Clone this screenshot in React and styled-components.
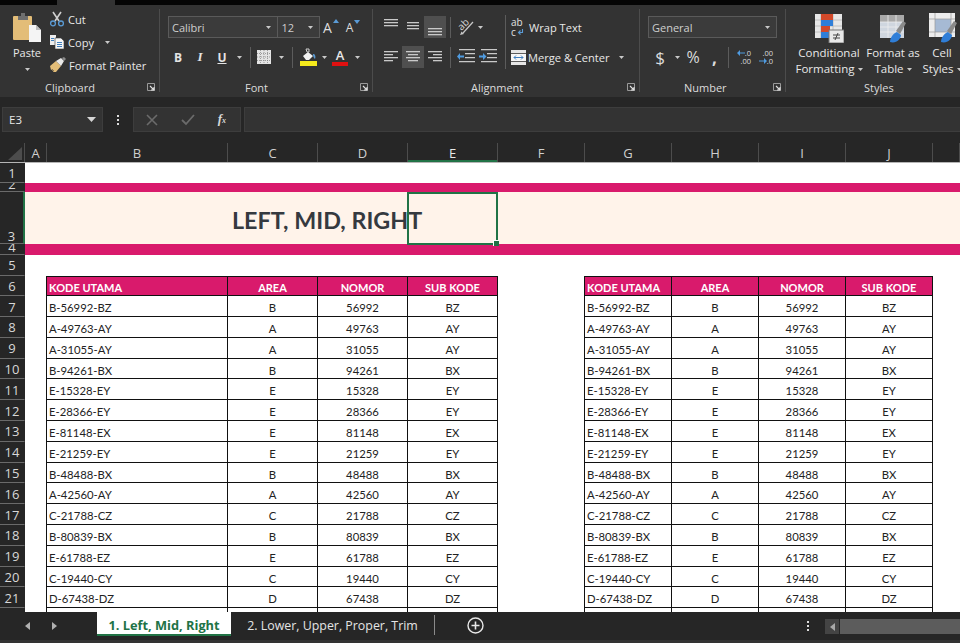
import React from 'react'
import styled, { createGlobalStyle } from 'styled-components'

const GRID = '25px 22px 181px 90px 90px 90px 87px 87px 87px 87px 87px 27px'
const UI_FONT = '"Open Sans", "Noto Sans", sans-serif'
const CELL_FONT = 'Lato, "Noto Sans", sans-serif'
const PINK = '#d91a6c'
const GREEN = '#217346'

const CODES = [
    'B-56992-BZ', 'A-49763-AY', 'A-31055-AY', 'B-94261-BX', 'E-15328-EY',
    'E-28366-EY', 'E-81148-EX', 'E-21259-EY', 'B-48488-BX', 'A-42560-AY',
    'C-21788-CZ', 'B-80839-BX', 'E-61788-EZ', 'C-19440-CY', 'D-67438-DZ',
]
const COLUMNS = ['A', 'B', 'C', 'D', 'E', 'F', 'G', 'H', 'I', 'J', '']

const Global = createGlobalStyle`
    html, body { margin: 0; padding: 0; height: 643px; overflow: hidden; background: #262626; }
    * { box-sizing: border-box; }
`

const Lines = ({ rows, color = '#c9c9c9' }) => (
    <svg width="18" height="18" viewBox="0 0 18 18">
        {rows.map(([x, y, w], i) => <rect key={i} x={x} y={y} width={w} height="1.3" fill={color} />)}
    </svg>
)

const PasteIcon = () => (
    <svg width="30" height="30" viewBox="0 0 30 30">
        <rect x="1" y="3" width="19" height="24" rx="1" fill="#e3bd78" />
        <path d="M6 7V3h3V0h4v3h3v4z" fill="#6f6f6f" />
        <path d="M17 12h7l5 5v12H17z" fill="#f4f4f4" />
        <path d="M24 12v5h5z" fill="#bdbdbd" />
    </svg>
)
const CutIcon = () => (
    <svg width="16" height="16" viewBox="0 0 16 16">
        <path d="M4 1l6 9M12 1l-6 9" stroke="#cfcfcf" strokeWidth="1.6" fill="none" />
        <circle cx="4" cy="12.4" r="2.4" stroke="#5b9bd5" strokeWidth="1.3" fill="none" />
        <circle cx="12" cy="12.4" r="2.4" stroke="#5b9bd5" strokeWidth="1.3" fill="none" />
    </svg>
)
const CopyIcon = () => (
    <svg width="16" height="16" viewBox="0 0 16 16">
        <path d="M1 1h6v10H1z" fill="#ededed" />
        <path d="M6 4h6l3 3v8H6z" fill="#f6f6f6" stroke="#3a3a3a" strokeWidth=".6" />
        <path d="M2 4h3v1H2zM2 6h3v1H2zM8 8h5v1H8zM8 10h5v1H8zM8 12h5v1H8z" fill="#3f7fbf" />
    </svg>
)
const PainterIcon = () => (
    <svg width="17" height="16" viewBox="0 0 17 16">
        <path d="M1 9l6-5 5 5-5 6H4l1-2-2 1 1-2-2 1z" fill="#e3bd78" />
        <path d="M7 4l5-3 3 3-3 5z" fill="#e9e9e9" />
        <path d="M13 1l2-1 2 2-2 2z" fill="#8c8c8c" />
    </svg>
)
const Launcher = () => (
    <svg width="8" height="8" viewBox="0 0 8 8">
        <path d="M.5.5h7v7h-7z" fill="none" stroke="#9a9a9a" />
        <path d="M3 3l4 4M4 7h3V4" fill="none" stroke="#e0e0e0" strokeWidth="1.1" />
    </svg>
)
const GrowIcon = ({ small, up }) => (
    <Grow $small={small}>
        A
        <svg width="6" height="4" viewBox="0 0 6 4"><path d={up ? 'M3 0l3 4H0z' : 'M0 0h6L3 4z'} fill="#5b9bd5" /></svg>
    </Grow>
)
const BorderIcon = () => (
    <svg width="14" height="14" viewBox="0 0 14 14">
        <rect width="14" height="14" fill="#e4e4e4" />
        <path d="M7 0v14M0 7h14M3.5 0v14M10.5 0v14M0 3.5h14M0 10.5h14" stroke="#7c7c7c" strokeWidth=".7" strokeDasharray="1 1" />
    </svg>
)
const FillIcon = () => (
    <svg width="17" height="18" viewBox="0 0 17 18">
        <path d="M3 8l5-4 5 4-4 4H6z" fill="#f2f2f2" />
        <path d="M6 1h3v3H7z" fill="none" stroke="#d0d0d0" />
        <path d="M13 6c2 0 3 2 2 5-1-1-2-2-2-5z" fill="#5b9bd5" />
        <rect y="13" width="17" height="5" fill="#f5ea1c" />
    </svg>
)
const OrientIcon = () => (
    <OrientGlyph>
        <span>ab</span>
        <svg width="18" height="18" viewBox="0 0 18 18">
            <path d="M16 4L6 15" fill="none" stroke="#c9c9c9" strokeWidth="1.2" />
            <path d="M3 17l4-1-2.500-2.500z" fill="#c9c9c9" />
        </svg>
    </OrientGlyph>
)
const WrapIcon = () => (
    <WrapGlyph>
        <span>ab</span>
        <span>c<svg width="7" height="7" viewBox="0 0 7 7"><path d="M5.500 0v3.500H2M3.500 1.500L1.500 3.500l2 2" fill="none" stroke="#5b9bd5" strokeWidth="1.1" /></svg></span>
    </WrapGlyph>
)
const MergeIcon = () => (
    <svg width="15" height="15" viewBox="0 0 15 15">
        <rect width="15" height="15" fill="#e6e6e6" />
        <path d="M0 3.500h15M0 11.500h15" stroke="#5c5c5c" />
        <rect x="0" y="4" width="15" height="7" fill="#f7f7f7" />
        <path d="M3 7.500h9M5 5.500l-2 2 2 2M10 5.500l2 2-2 2" fill="none" stroke="#3f7fbf" />
    </svg>
)
const IndentIcon = ({ flip }) => (
    <svg width="18" height="16" viewBox="0 0 18 16">
        <path d="M2 0h16v1.300H2zM8 4h10v1.300H8zM8 8h10v1.300H8zM2 12h16v1.300H2z" fill="#c9c9c9" />
        <path d={flip ? 'M0 6.500h4V4l3.500 3.500L4 11V8.500H0z' : 'M7 6.500H3V4L0 7.500 3 11V8.500h4z'} fill="#4f9be0" />
    </svg>
)
const DecimalArrow = ({ left }) => (
    <svg width="8" height="6" viewBox="0 0 8 6"><path d={left ? 'M8 2.500H3V0L0 3l3 3V3.500h5z' : 'M0 2.500h5V0l3 3-3 3V3.500H0z'} fill="#4f9be0" /></svg>
)
const DecimalIcon = ({ left }) => (
    <DecimalGlyph>
        {left
            ? <><span><DecimalArrow left />.0</span><span>.00</span></>
            : <><span>.00</span><span><DecimalArrow />.0</span></>}
    </DecimalGlyph>
)
const Brush = ({ x }) => (
    <g transform={`translate(${x} 0)`}>
        <path d="M0 29c0-5 4-9 7-10l4 3c0 4-5 9-11 7z" fill="#2f7ed8" />
        <path d="M6 18l7-10 3 2-6 11z" fill="#8a8a8a" />
    </g>
)
const ConditionalIcon = () => (
    <svg width="30" height="30" viewBox="0 0 30 30">
        <rect x="1" y="1" width="27" height="24" fill="#e7e7e7" />
        <path d="M7 1v24M19 1v24M1 7h27M1 13h27M1 19h27" stroke="#b5b5b5" strokeWidth=".8" />
        <rect x="7" y="1" width="12" height="6" fill="#d2492a" />
        <rect x="7" y="7" width="12" height="6" fill="#2f7ed8" />
        <rect x="7" y="13" width="9" height="6" fill="#d2492a" />
        <rect x="7" y="19" width="9" height="6" fill="#2f7ed8" />
        <rect x="15" y="17" width="15" height="13" fill="#e8e8e8" stroke="#777" />
        <path d="M19 22h7M19 25h7M24 20l-3 7" stroke="#444" strokeWidth="1" />
    </svg>
)
const TableIcon = () => (
    <svg width="34" height="30" viewBox="0 0 34 30">
        <rect x="4" y="2" width="24" height="23" fill="#cfd6df" />
        <rect x="4" y="2" width="24" height="7" fill="#a9a9a9" />
        <path d="M12 2v23M20 2v23M4 9h24M4 14h24M4 19h24" stroke="#eeeeee" strokeWidth=".8" />
        <Brush x={14} />
    </svg>
)
const CellIcon = () => (
    <svg width="34" height="30" viewBox="0 0 34 30">
        <rect x="4" y="0" width="26" height="24" fill="#ececec" />
        <rect x="10" y="6" width="16" height="13" fill="#a6bad4" />
        <path d="M10 0v24M26 0v24M4 6h26M4 19h26" stroke="#9a9a9a" strokeWidth=".7" />
        <Brush x={16} />
    </svg>
)
const Triangle = () => <svg width="5" height="3" viewBox="0 0 5 3"><path d="M0 0h5L2.500 3z" fill="#c9c9c9" /></svg>

const App = () => {
    return (
        <Page>
            <Global />
            <TopStrip><ActiveTabStub /></TopStrip>
            <Ribbon>
                <Group $w={160}>
                    <GroupBody $pl={8}>
                        <PasteButton>
                            <PasteIcon />
                            <span>Paste</span>
                            <Triangle />
                        </PasteButton>
                        <SmallColumn>
                            <SmallAction><CutIcon />Cut</SmallAction>
                            <SmallAction><CopyIcon />Copy<Caret $ml={8}><Triangle /></Caret></SmallAction>
                            <SmallAction><PainterIcon />Format Painter</SmallAction>
                        </SmallColumn>
                    </GroupBody>
                    <GroupLabel $lead={45}><span />Clipboard<Launcher /></GroupLabel>
                </Group>
                <Group $w={213}>
                    <Stack $pl={8} $top>
                        <ToolRow>
                            <Combo $w={152}>
                                <ComboPart $w={110}>Calibri<Triangle /></ComboPart>
                                <ComboPart $w={42}>12<Triangle /></ComboPart>
                            </Combo>
                            <GrowIcon up />
                            <GrowIcon small />
                        </ToolRow>
                        <ToolRow $ml={-1}>
                            <Tool><Bold>B</Bold></Tool>
                            <Tool><Italic>I</Italic></Tool>
                            <Tool><Under>U</Under></Tool>
                            <Caret $w={12}><Triangle /></Caret>
                            <Divider $ml={5} $mr={2} />
                            <Tool><BorderIcon /></Tool>
                            <Caret $w={12}><Triangle /></Caret>
                            <Divider $ml={5} $mr={4} />
                            <Tool><FillIcon /></Tool>
                            <Caret $w={10}><Triangle /></Caret>
                            <Tool><FontColor>A</FontColor></Tool>
                            <Caret $w={12}><Triangle /></Caret>
                        </ToolRow>
                    </Stack>
                    <GroupLabel $lead={85}><span />Font<Launcher /></GroupLabel>
                </Group>
                <Group $w={267}>
                    <GroupBody $pl={7}>
                        <Stack>
                            <ToolRow>
                                <Tool><Lines rows={[[2, 1, 14], [2, 4, 14], [2, 7, 14]]} /></Tool>
                                <Tool><Lines rows={[[3, 4, 12], [3, 7, 12], [3, 10, 12]]} /></Tool>
                                <Tool $active><Lines rows={[[2, 10, 14], [2, 13, 14], [2, 16, 14]]} /></Tool>
                                <Divider $ml={4} $mr={4} />
                                <Tool><OrientIcon /></Tool>
                                <Caret $w={7}><Triangle /></Caret>
                            </ToolRow>
                            <ToolRow>
                                <Tool><Lines rows={[[2, 3, 14], [2, 6, 9], [2, 9, 14], [2, 12, 9]]} /></Tool>
                                <Tool $active><Lines rows={[[2, 3, 14], [4, 6, 10], [2, 9, 14], [4, 12, 10]]} /></Tool>
                                <Tool><Lines rows={[[2, 3, 14], [7, 6, 9], [2, 9, 14], [7, 12, 9]]} /></Tool>
                                <Divider $ml={4} $mr={4} />
                                <Tool><IndentIcon /></Tool>
                                <Tool><IndentIcon flip /></Tool>
                            </ToolRow>
                        </Stack>
                        <TallDivider />
                        <Stack $w={125}>
                            <ToolRow><WrapIcon /><ActionText>Wrap Text</ActionText></ToolRow>
                            <ToolRow><MergeIcon /><ActionText>Merge &amp; Center</ActionText><Caret $ml={9}><Triangle /></Caret></ToolRow>
                        </Stack>
                    </GroupBody>
                    <GroupLabel $lead={98}><span />Alignment<Launcher /></GroupLabel>
                </Group>
                <Group $w={146}>
                    <Stack $pl={8} $top>
                        <ToolRow>
                            <Combo $w={129}><ComboPart $w={129}>General<Triangle /></ComboPart></Combo>
                        </ToolRow>
                        <ToolRow>
                            <Tool $w={24}><Symbol $size={17}>$</Symbol></Tool>
                            <Caret $w={10}><Triangle /></Caret>
                            <Tool><Symbol $size={16}>%</Symbol></Tool>
                            <Tool $w={21}><Symbol $size={17} $heavy>,</Symbol></Tool>
                            <Divider $ml={3} $mr={4} />
                            <Tool><DecimalIcon left /></Tool>
                            <Tool><DecimalIcon /></Tool>
                        </ToolRow>
                    </Stack>
                    <GroupLabel $lead={44}><span />Number<Launcher /></GroupLabel>
                </Group>
                <Group $w={174} $last>
                    <GroupBody $pl={10}>
                        <BigButton $w={66}><ConditionalIcon /><span>Conditional<br />Formatting <Triangle /></span></BigButton>
                        <BigButton $w={56}><TableIcon /><span>Format as<br />Table <Triangle /></span></BigButton>
                        <BigButton $w={36}><CellIcon /><span>Cell<br />Styles <Triangle /></span></BigButton>
                    </GroupBody>
                    <GroupLabel $lead={78}><span />Styles<span /></GroupLabel>
                </Group>
            </Ribbon>
            <FormulaBar>
                <NameBox>E3<svg width="9" height="5" viewBox="0 0 9 5"><path d="M0 0h9L4.500 5z" fill="#d6d6d6" /></svg></NameBox>
                <KebabSlot><Kebab /></KebabSlot>
                <FormulaTools>
                    <svg width="12" height="12" viewBox="0 0 12 12"><path d="M1 1l10 10M11 1L1 11" stroke="#6b6b6b" strokeWidth="1.6" /></svg>
                    <svg width="14" height="12" viewBox="0 0 14 12"><path d="M1 6l4 4 8-9" stroke="#6b6b6b" strokeWidth="1.800" fill="none" /></svg>
                    <Fx>f<sub>x</sub></Fx>
                </FormulaTools>
                <FormulaInput />
            </FormulaBar>
            <ColumnHeaders>
                <Corner><svg width="14" height="13" viewBox="0 0 14 13"><path d="M14 0v13H0z" fill="#4c4c4c" /></svg></Corner>
                {COLUMNS.map((c, i) => <ColumnHead key={i} $active={c === 'E'}>{c}</ColumnHead>)}
            </ColumnHeaders>
            <Sheet>
                <SheetRow $h={20}><RowHead>1</RowHead></SheetRow>
                <SheetRow $h={9} $bg={PINK}><RowHead $bottom>2</RowHead></SheetRow>
                <SheetRow $h={52} $bg="#fff3ea">
                    <RowHead $active $bottom>3</RowHead>
                    <span /><span />
                    <TitleCell>LEFT, MID, RIGHT</TitleCell>
                    <span />
                    <SelectedCell><Handle /></SelectedCell>
                </SheetRow>
                <SheetRow $h={11} $bg={PINK}><RowHead $bottom>4</RowHead></SheetRow>
                <SheetRow $h={20.5}><RowHead>5</RowHead></SheetRow>
                <SheetRow $h={20.8}>
                    <RowHead>6</RowHead>
                    <span />
                    <HeadCell $first $left>KODE UTAMA</HeadCell>
                    <HeadCell>AREA</HeadCell>
                    <HeadCell>NOMOR</HeadCell>
                    <HeadCell>SUB KODE</HeadCell>
                    <span />
                    <HeadCell $first $left>KODE UTAMA</HeadCell>
                    <HeadCell>AREA</HeadCell>
                    <HeadCell>NOMOR</HeadCell>
                    <HeadCell>SUB KODE</HeadCell>
                </SheetRow>
                {CODES.map((code, i) => {
                    const [area, nomor, sub] = code.split('-')
                    return (
                        <SheetRow key={code} $h={20.8}>
                            <RowHead>{i + 7}</RowHead>
                            <span />
                            <DataCell $first $left>{code}</DataCell>
                            <DataCell>{area}</DataCell>
                            <DataCell>{nomor}</DataCell>
                            <DataCell>{sub}</DataCell>
                            <span />
                            <DataCell $first $left>{code}</DataCell>
                            <DataCell>{area}</DataCell>
                            <DataCell>{nomor}</DataCell>
                            <DataCell>{sub}</DataCell>
                        </SheetRow>
                    )
                })}
                <SheetRow $h={20.8}>
                    <RowHead />
                    <span />
                    <DataCell $first /><DataCell /><DataCell /><DataCell />
                    <span />
                    <DataCell $first /><DataCell /><DataCell /><DataCell />
                </SheetRow>
            </Sheet>
            <TabBar>
                <TabArrows>
                    <svg width="5" height="8" viewBox="0 0 5 8"><path d="M5 0v8L0 4z" fill="#b0b0b0" /></svg>
                    <svg width="5" height="8" viewBox="0 0 5 8"><path d="M0 0v8l5-4z" fill="#b0b0b0" /></svg>
                </TabArrows>
                <ActiveSheetTab>1. Left, Mid, Right</ActiveSheetTab>
                <SheetTab>2. Lower, Upper, Proper, Trim</SheetTab>
                <TabDivider />
                <AddSheet>
                    <svg width="17" height="17" viewBox="0 0 17 17">
                        <circle cx="8.500" cy="8.500" r="7.500" fill="none" stroke="#e8e8e8" strokeWidth="1.400" />
                        <path d="M4.500 8.500h8M8.500 4.500v8" stroke="#e8e8e8" strokeWidth="1.600" />
                    </svg>
                </AddSheet>
                <TabKebab><Kebab /></TabKebab>
                <Scrollbar>
                    <ScrollButton><svg width="5" height="8" viewBox="0 0 5 8"><path d="M5 0v8L0 4z" fill="#a8a8a8" /></svg></ScrollButton>
                    <ScrollThumb />
                </Scrollbar>
            </TabBar>
        </Page>
    )
}

const Page = styled.div`
    width: 960px;
    height: 643px;
    display: flex;
    flex-direction: column;
    overflow: hidden;
    background: #262626;
    font-family: ${UI_FONT};
    color: #e8e8e8;
`

const TopStrip = styled.div`
    height: 5px;
    flex: none;
    background: #050505;
    padding-left: 57px;
`

const ActiveTabStub = styled.div`
    width: 58px;
    height: 5px;
    background: #333;
`

const Ribbon = styled.div`
    height: 92px;
    flex: none;
    display: flex;
    background: #333;
    overflow: hidden;
    font-size: 11px;
`

const Group = styled.div`
    width: ${({ $w }) => $w}px;
    flex: none;
    position: relative;
    &::after{
        content: "";
        display: ${({ $last }) => $last ? 'none' : 'block'};
        position: absolute;
        right: 0;
        top: 4px;
        bottom: 5px;
        width: 1px;
        background: #4c4c4c;
    }
`

const GroupBody = styled.div`
    height: 70px;
    display: flex;
    padding-left: ${({ $pl }) => $pl || 0}px;
    padding-top: 4px;
`

const Stack = styled.div`
    flex: none;
    display: flex;
    flex-direction: column;
    gap: 8px;
    height: ${({ $top }) => $top ? '70px' : 'auto'};
    width: ${({ $w }) => $w ? `${$w}px` : 'auto'};
    padding: ${({ $top }) => $top ? 11 : 7}px 0 0 ${({ $pl }) => $pl || 0}px;
`

const GroupLabel = styled.div`
    height: 22px;
    display: grid;
    grid-template-columns: ${({ $lead }) => $lead}px auto 1fr;
    align-items: center;
    padding: 2px 5px 0 0;
    font-size: 11px;
    color: #dcdcdc;
    svg{ justify-self: end; }
`

const PasteButton = styled.div`
    width: 38px;
    display: flex;
    flex-direction: column;
    align-items: center;
    padding-top: 4px;
    font-size: 11px;
    svg{ flex: none; }
    span{ margin-top: 2px; line-height: 16px; }
    > svg:last-child{ margin-top: 7px; }
`

const SmallColumn = styled.div`
    display: flex;
    flex-direction: column;
    gap: 3px;
    padding-left: 3px;
`

const SmallAction = styled.div`
    height: 20px;
    display: flex;
    align-items: center;
    gap: 3px;
    white-space: nowrap;
    font-size: 11.100px;
    svg{ flex: none; }
`

const Caret = styled.span`
    display: inline-flex;
    align-items: center;
    justify-content: center;
    flex: none;
    width: ${({ $w }) => $w ? `${$w}px` : 'auto'};
    margin-left: ${({ $ml }) => $ml || 0}px;
`

const ToolRow = styled.div`
    height: 22px;
    display: flex;
    align-items: center;
    margin-left: ${({ $ml }) => $ml || 0}px;
`

const Combo = styled.div`
    width: ${({ $w }) => $w}px;
    height: 22px;
    flex: none;
    display: flex;
    border: 1px solid #5a5a5a;
    background: #3b3b3b;
`

const ComboPart = styled.div`
    flex: 1 1 ${({ $w }) => $w}px;
    display: flex;
    align-items: center;
    justify-content: space-between;
    padding: 0 6px 0 3px;
    font-size: 11px;
    color: #cfcfcf;
    & + &{ border-left: 1px solid #5a5a5a; }
`

const Grow = styled.span`
    width: 22px;
    display: flex;
    justify-content: center;
    font-size: ${({ $small }) => $small ? 12 : 14}px;
    color: #dedede;
    svg{ margin-top: 1px; margin-left: 1px; }
`

const Tool = styled.div`
    width: ${({ $w }) => $w || 22}px;
    height: 22px;
    flex: none;
    display: flex;
    align-items: center;
    justify-content: center;
    background: ${({ $active }) => $active ? '#4f4f4f' : 'transparent'};
`

const Bold = styled.b`
    font-size: 12px;
    color: #e4e4e4;
`

const Italic = styled.i`
    font-family: "Liberation Serif", serif;
    font-weight: 700;
    font-size: 13px;
    color: #e4e4e4;
`

const Under = styled.span`
    font-size: 12px;
    font-weight: 700;
    text-decoration: underline;
    color: #e4e4e4;
`

const FontColor = styled.span`
    width: 16px;
    font-size: 13px;
    font-weight: 600;
    line-height: 14px;
    text-align: center;
    border-bottom: 4px solid #e01010;
`

const Divider = styled.div`
    width: 1px;
    height: 21px;
    flex: none;
    background: #5c5c5c;
    margin-left: ${({ $ml }) => $ml}px;
    margin-right: ${({ $mr }) => $mr}px;
`

const TallDivider = styled.div`
    width: 1px;
    height: 54px;
    flex: none;
    margin: 6px 5px 0 6px;
    background: #5c5c5c;
`

const ActionText = styled.span`
    margin-left: 2px;
    font-size: 11.100px;
    white-space: nowrap;
`

const OrientGlyph = styled.span`
    position: relative;
    width: 18px;
    height: 18px;
    span{
        position: absolute;
        left: 0;
        top: 1px;
        font-size: 10px;
        line-height: 10px;
        color: #d6d6d6;
        transform: rotate(-45deg);
    }
    svg{ position: absolute; left: 0; top: 0; }
`

const WrapGlyph = styled.span`
    width: 16px;
    display: flex;
    flex-direction: column;
    font-size: 10px;
    line-height: 10px;
    color: #e2e2e2;
    span{ display: flex; align-items: center; gap: 1px; }
`

const Symbol = styled.span`
    font-size: ${({ $size }) => $size}px;
    font-weight: ${({ $heavy }) => $heavy ? 700 : 400};
    color: #dcdcdc;
`

const DecimalGlyph = styled.span`
    display: flex;
    flex-direction: column;
    align-items: flex-end;
    font-size: 7.500px;
    line-height: 8px;
    color: #dcdcdc;
    span{ display: flex; align-items: center; }
`

const BigButton = styled.div`
    width: ${({ $w }) => $w}px;
    flex: none;
    display: flex;
    flex-direction: column;
    align-items: center;
    margin-right: 3px;
    padding-top: 4px;
    > svg{ flex: none; }
    span{
        margin-top: 2px;
        font-size: 11.500px;
        line-height: 16px;
        text-align: center;
        white-space: nowrap;
    }
    span svg{ vertical-align: middle; }
`

const FormulaBar = styled.div`
    height: 46px;
    flex: none;
    display: flex;
    align-items: flex-start;
    padding: 10px 0 0 2px;
    background: #262626;
`

const NameBox = styled.div`
    width: 101px;
    height: 25px;
    flex: none;
    display: flex;
    align-items: center;
    justify-content: space-between;
    padding: 0 6px;
    font-size: 11.500px;
    border: 1px solid #3d3d3d;
    background: #333;
`

const KebabSlot = styled.div`
    width: 30px;
    height: 25px;
    flex: none;
    display: flex;
    align-items: center;
    justify-content: center;
`

const Kebab = styled.span`
    width: 2px;
    height: 10px;
    display: flex;
    flex-direction: column;
    justify-content: space-between;
    background: linear-gradient(#dcdcdc, #dcdcdc) center / 2px 2px no-repeat;
    &::before, &::after{
        content: "";
        width: 2px;
        height: 2px;
        background: #dcdcdc;
    }
`

const FormulaTools = styled.div`
    width: 108px;
    height: 25px;
    flex: none;
    display: flex;
    align-items: center;
    justify-content: space-between;
    padding: 0 14px 0 12px;
    border: 1px solid #3d3d3d;
    background: #333;
`

const Fx = styled.span`
    font-family: "Liberation Serif", serif;
    font-style: italic;
    font-weight: 700;
    font-size: 13px;
    line-height: 14px;
    color: #d8d8d8;
    sub{ font-size: 8px; vertical-align: baseline; }
`

const FormulaInput = styled.div`
    flex: 1;
    height: 25px;
    margin-left: 3px;
    border: 1px solid #3d3d3d;
    border-right: 0;
    background: #333;
`

const ColumnHeaders = styled.div`
    height: 20px;
    flex: none;
    display: grid;
    grid-template-columns: ${GRID};
    background: #262626;
    border-bottom: 1px solid #b5b5b5;
`

const Corner = styled.div`
    display: flex;
    align-items: flex-end;
    justify-content: flex-end;
    padding: 0 2px 2px 0;
    border-right: 1px solid #4c4c4c;
`

const ColumnHead = styled.div`
    display: flex;
    align-items: center;
    justify-content: center;
    font-size: 13px;
    color: #cfcfcf;
    border-right: 1px solid #4c4c4c;
    ${({ $active }) => $active && `box-shadow: inset 0 -2px 0 ${GREEN}; color: #e8e8e8;`}
`

const Sheet = styled.div`
    flex: 1;
    min-height: 0;
    overflow: hidden;
    background: #fff;
`

const SheetRow = styled.div`
    height: ${({ $h }) => $h}px;
    display: grid;
    grid-template-columns: ${GRID};
    background: ${({ $bg }) => $bg || '#fff'};
`

const RowHead = styled.div`
    display: flex;
    justify-content: center;
    align-items: ${({ $bottom }) => $bottom ? 'flex-end' : 'center'};
    padding-top: ${({ $bottom }) => $bottom ? 0 : 2}px;
    overflow: hidden;
    font-size: 13px;
    line-height: 13px;
    color: #d8d8d8;
    background: #262626;
    border-bottom: 1px solid #6a6a6a;
    border-right: ${({ $active }) => $active ? `2px solid ${GREEN}` : '1px solid #262626'};
`

const TitleCell = styled.div`
    display: flex;
    align-items: center;
    padding: 3px 0 0 4px;
    font-family: ${CELL_FONT};
    font-size: 23.300px;
    font-weight: 700;
    color: #35393f;
    white-space: nowrap;
`

const SelectedCell = styled.div`
    position: relative;
    z-index: 2;
    margin: 0 0 -1px -1px;
    border: 2px solid ${GREEN};
`

const Handle = styled.div`
    position: absolute;
    right: -3px;
    bottom: -3px;
    width: 6px;
    height: 6px;
    background: ${GREEN};
    border: 1px solid #fff;
    border-width: 1px 0 0 1px;
`

const DataCell = styled.div`
    display: flex;
    align-items: center;
    justify-content: ${({ $left }) => $left ? 'flex-start' : 'center'};
    padding: 3px 0 0 ${({ $left }) => $left ? 2 : 0}px;
    font-family: ${CELL_FONT};
    font-size: 11.300px;
    color: #222;
    white-space: nowrap;
    border-right: 1px solid #111;
    border-bottom: 1px solid #111;
    ${({ $first }) => $first && 'margin-left: -1px; border-left: 1px solid #111;'}
`

const HeadCell = styled(DataCell)`
    font-size: 11px;
    font-weight: 700;
    color: #fff;
    background: ${PINK};
    border-top: 1px solid #111;
`

const TabBar = styled.div`
    height: 31px;
    flex: none;
    display: flex;
    align-items: flex-start;
    background: #262626;
    border-bottom: 3px solid #333;
`

const TabArrows = styled.div`
    width: 97px;
    height: 27px;
    flex: none;
    display: flex;
    align-items: center;
    gap: 22px;
    padding-left: 25px;
`

const ActiveSheetTab = styled.div`
    width: 134px;
    height: 24px;
    flex: none;
    display: flex;
    align-items: center;
    justify-content: center;
    padding-top: 3px;
    font-size: 12.800px;
    font-weight: 700;
    color: ${GREEN};
    background: #fff;
    border-bottom: 2px solid ${GREEN};
`

const SheetTab = styled.div`
    width: 203px;
    height: 27px;
    flex: none;
    display: flex;
    align-items: center;
    justify-content: center;
    font-size: 12.400px;
    color: #e4e4e4;
`

const TabDivider = styled.div`
    width: 1px;
    height: 20px;
    margin-top: 3px;
    flex: none;
    background: #8a8a8a;
`

const AddSheet = styled.div`
    height: 27px;
    flex: none;
    display: flex;
    align-items: center;
    margin-left: 32px;
`

const TabKebab = styled.div`
    height: 27px;
    flex: none;
    display: flex;
    align-items: center;
    margin-left: auto;
    margin-right: 16px;
`

const Scrollbar = styled.div`
    width: 135px;
    height: 15px;
    flex: none;
    margin-top: 7px;
    display: flex;
    gap: 1px;
`

const ScrollButton = styled.div`
    width: 14px;
    display: flex;
    align-items: center;
    justify-content: center;
    background: #444;
`

const ScrollThumb = styled.div`
    flex: 1;
    background: #5c5c5c;
`

export default App
